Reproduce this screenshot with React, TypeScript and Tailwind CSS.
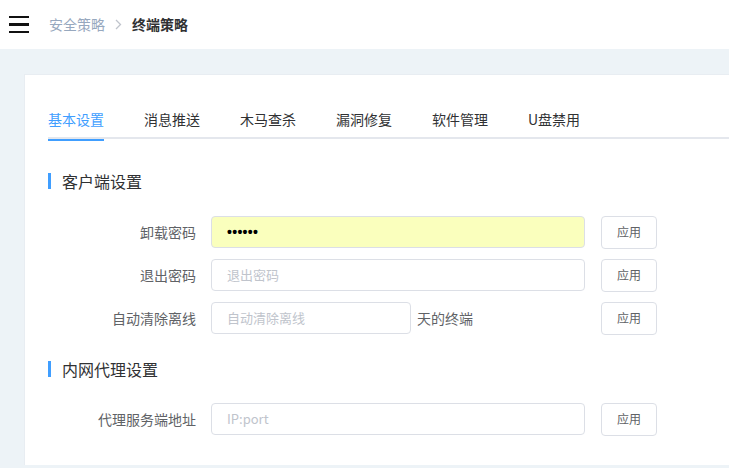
import React from "react";

const tabs = ["基本设置", "消息推送", "木马查杀", "漏洞修复", "软件管理", "U盘禁用"];

const SectionTitle = ({ title }: { title: string }) => (
  <div className="flex items-center h-[16px]">
    <div className="w-[3px] h-[16px] bg-[#409eff]" />
    <span className="ml-[11px] text-[16px] leading-[16px] text-[#303133]">{title}</span>
  </div>
);

const ApplyButton = () => (
  <button className="ml-[16px] w-[56px] h-[33px] border border-[#dcdfe6] rounded-[4px] bg-white text-[12px] text-[#606266]">
    应用
  </button>
);

const FormRow = ({ label, children }: { label: string; children: React.ReactNode }) => (
  <div className="flex items-center h-[32px]">
    <div className="w-[163px] pr-[15px] text-right text-[14px] text-[#606266]">{label}</div>
    <div className="w-[374px] flex items-center">{children}</div>
    <ApplyButton />
  </div>
);

const Input = ({ placeholder, value, className }: { placeholder?: string; value?: string; className?: string }) => (
  <div
    className={`h-[32px] border border-[#dcdfe6] rounded-[4px] px-[15px] flex items-center text-[13px] ${className ?? ""}`}
  >
    {value ? (
      <span className="text-[#000] text-[14px] font-bold tracking-[0.3px]" style={{ fontFamily: '"Liberation Sans", sans-serif' }}>
        {value}
      </span>
    ) : (
      <span className="text-[#c0c4cc]">{placeholder}</span>
    )}
  </div>
);

export default function App() {
  return (
    <div
      className="w-[729px] h-[468px] bg-[#edf3f7] flex flex-col overflow-hidden"
      style={{ fontFamily: '"Noto Sans CJK SC", "Noto Sans", sans-serif' }}
    >
      <header className="h-[49px] bg-white flex items-center shrink-0">
        <div className="ml-[9px] w-[20px] flex flex-col gap-[5px]">
          <div className="h-[2.5px] bg-[#111]" />
          <div className="h-[2.5px] bg-[#111]" />
          <div className="h-[2.5px] bg-[#111]" />
        </div>
        <div className="ml-[20px] flex items-center text-[14px]">
          <span className="text-[#97a8be]">安全策略</span>
          <span className="mx-[10px] text-[#c0c4cc]">
            <svg width="7" height="11" viewBox="0 0 7 11" fill="none">
              <path d="M1 1l4.5 4.5L1 10" stroke="#c0c4cc" strokeWidth="1.3" />
            </svg>
          </span>
          <span className="text-[#303133] font-bold">终端策略</span>
        </div>
      </header>

      <main className="flex-1 pl-[24px] pt-[25px] pb-[3px]">
        <div className="h-full bg-white border-l border-t border-[#e8edf2] pl-[23px] pt-[24px]">
          <div className="flex border-b-2 border-[#e4e7ed] h-[40px]">
            {tabs.map((t, i) => (
              <div
                key={t}
                className={`relative h-[40px] flex items-center text-[14px] ${i === 0 ? "pr-[20px]" : "px-[20px]"} ${
                  i === 0 ? "text-[#409eff]" : "text-[#303133]"
                }`}
              >
                {t}
                {i === 0 && <div className="absolute left-0 right-[20px] bottom-[-2px] h-[2px] bg-[#409eff]" />}
              </div>
            ))}
          </div>

          <div className="mt-[34px]">
            <SectionTitle title="客户端设置" />
          </div>

          <div className="mt-[27px] flex flex-col gap-[11px]">
            <FormRow label="卸载密码">
              <Input value="••••••" className="w-[374px] bg-[#faffbd]" />
            </FormRow>
            <FormRow label="退出密码">
              <Input placeholder="退出密码" className="w-[374px]" />
            </FormRow>
            <FormRow label="自动清除离线">
              <Input placeholder="自动清除离线" className="w-[200px]" />
              <span className="ml-[6px] text-[14px] text-[#606266]">天的终端</span>
            </FormRow>
          </div>

          <div className="mt-[27px]">
            <SectionTitle title="内网代理设置" />
          </div>

          <div className="mt-[26px]">
            <FormRow label="代理服务端地址">
              <Input placeholder="IP:port" className="w-[374px]" />
            </FormRow>
          </div>
        </div>
      </main>
    </div>
  );
}
